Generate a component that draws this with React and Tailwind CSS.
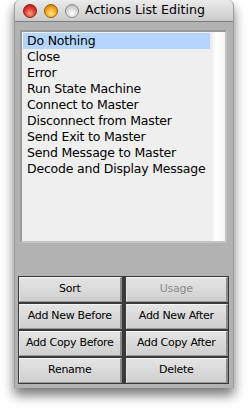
import React from "react";

const items = [
  "Do Nothing",
  "Close",
  "Error",
  "Run State Machine",
  "Connect to Master",
  "Disconnect from Master",
  "Send Exit to Master",
  "Send Message to Master",
  "Decode and Display Message",
];

const buttons = [
  ["Sort", false],
  ["Usage", true],
  ["Add New Before", false],
  ["Add New After", false],
  ["Add Copy Before", false],
  ["Add Copy After", false],
  ["Rename", false],
  ["Delete", false],
];

function Btn({ label, disabled }) {
  return (
    <div className="h-[27px] bg-[#3a3a3a] p-[1px]">
      <div
        className={
          "h-full flex items-center justify-center border-t border-t-[#f4f4f4] border-l border-l-[#e6e6e6] border-r-2 border-r-[#8a8a8a] border-b border-b-[#9a9a9a] bg-[linear-gradient(#e4e4e4,#cfcfcf)] text-[11px] tracking-[-0.3px] whitespace-nowrap " +
          (disabled ? "text-[#8c8c8c]" : "text-black")
        }
      >
        {label}
      </div>
    </div>
  );
}

export default function App() {
  return (
    <div
      className="w-[248px] h-[410px] bg-white relative"
      style={{ fontFamily: '"DejaVu Sans", "Liberation Sans", sans-serif' }}
    >
      <div className="absolute left-[14px] top-0 w-[220px] h-[388px] rounded-t-[6px] bg-[#b2b2b2] shadow-[0_7px_12px_rgba(0,0,0,0.55)] flex flex-col overflow-hidden border-x border-[#9c9c9c]">
        <div className="h-[22px] shrink-0 flex items-center bg-[linear-gradient(#ebebeb,#c9c9c9)] border-b border-[#7f7f7f] pl-[8px]">
          <div className="w-[14px] h-[14px] rounded-full border border-[#8a1d14] bg-[radial-gradient(circle_at_50%_70%,#ff9a86,#d8362a_55%,#9e1c14)]" />
          <div className="w-[14px] h-[14px] rounded-full border border-[#9a5a00] bg-[radial-gradient(circle_at_50%_70%,#ffe48a,#f0a51c_55%,#b56a00)] ml-[7px]" />
          <div className="w-[14px] h-[14px] rounded-full border border-[#8a8a8a] bg-[radial-gradient(circle_at_50%_70%,#ffffff,#d6d6d6_55%,#a8a8a8)] ml-[7px]" />
          <div className="ml-[6px] text-[12.6px] text-black leading-none whitespace-nowrap">Actions List Editing</div>
        </div>
        <div className="flex-1 flex flex-col px-[3px] pt-[8px]">
          <div className="h-[213px] ml-[2px] mr-[3px] border-l-2 border-t-2 border-[#9a9a9a] border-b-2 border-b-[#c4c4c4] border-r-2 border-r-[#c4c4c4] flex bg-[#efefef]">
            <div className="flex-1 min-w-0 pt-[1px] pl-[1px]">
              {items.map((t, i) => (
                <div
                  key={t}
                  className={
                    "h-[16px] leading-[16px] pl-[4px] text-[12.5px] tracking-[-0.2px] text-black whitespace-nowrap " +
                    (i === 0 ? "bg-[#b5d5ff]" : "")
                  }
                >
                  {t}
                </div>
              ))}
            </div>
            <div className="w-[15px] shrink-0 bg-[linear-gradient(90deg,#e8e8e8,#ffffff_40%,#f4f4f4)]" />
          </div>
          <div className="mt-[33px] grid grid-cols-2 gap-x-[2px] bg-[#3a3a3a] w-[211px]">
            {buttons.map(([l, d]) => (
              <Btn key={l} label={l} disabled={d} />
            ))}
          </div>
        </div>
      </div>
    </div>
  );
}
